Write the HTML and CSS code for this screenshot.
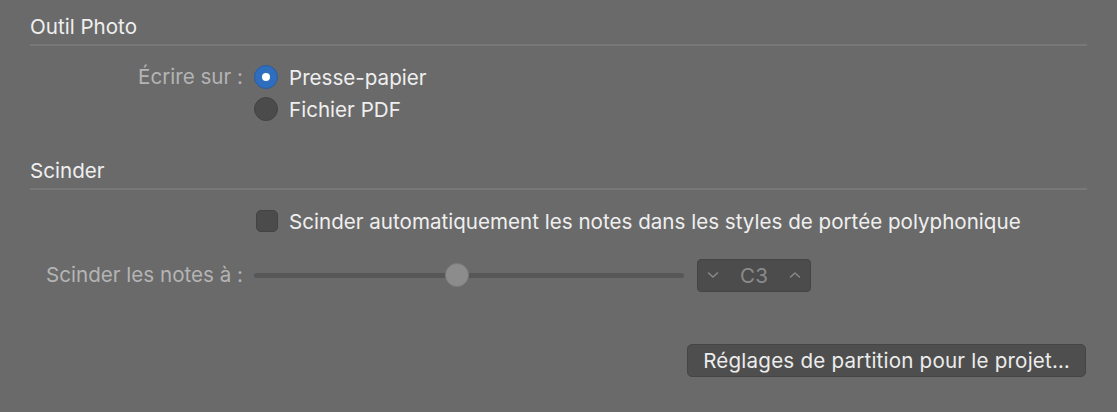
FILE: index.html
```html
<!DOCTYPE html>
<html lang="fr">
<head>
    <meta charset="UTF-8">
    <meta name="viewport" content="width=device-width, initial-scale=1.0">
    <link rel="stylesheet" href="styles.css">
    <title>Réglages de partition</title>
</head>
<body>

<div class="panel">
    <h2 class="section-title">Outil Photo</h2>

    <div class="form-row radio-group">
        <div class="form-label">Écrire sur :</div>
        <div class="form-controls">
            <label class="option">
                <span class="radio checked"></span>
                <span>Presse-papier</span>
            </label>
            <label class="option">
                <span class="radio"></span>
                <span>Fichier PDF</span>
            </label>
        </div>
    </div>

    <h2 class="section-title second">Scinder</h2>

    <div class="form-row check-row">
        <div class="form-label"></div>
        <div class="form-controls">
            <label class="option">
                <span class="checkbox"></span>
                <span>Scinder automatiquement les notes dans les styles de portée polyphonique</span>
            </label>
        </div>
    </div>

    <div class="form-row slider-row">
        <div class="form-label">Scinder les notes à :</div>
        <div class="form-controls inline">
            <div class="slider">
                <div class="slider-track"></div>
                <div class="slider-thumb" style="left: 44.4%"></div>
            </div>
            <div class="stepper">
                <svg class="chevron" width="12" height="8" viewBox="0 0 12 8"><path d="M1.5 2 L6 6 L10.5 2" /></svg>
                <span class="stepper-value">C3</span>
                <svg class="chevron" width="12" height="8" viewBox="0 0 12 8"><path d="M1.5 6 L6 2 L10.5 6" /></svg>
            </div>
        </div>
    </div>

    <div class="actions">
        <button class="button">Réglages de partition pour le projet…</button>
    </div>
</div>

</body>
</html>
```

FILE: styles.css
```css
body {
    margin: 0;
    background-color: #6a6a6a;
    font-family: Inter, "Noto Sans", sans-serif;
    font-size: 20.6px;
    color: #efefef;
}

.panel {
    padding: 15px 30px 0 30px;
}

.section-title {
    margin: 0;
    font-size: 20.6px;
    font-weight: normal;
    line-height: 24px;
    padding-bottom: 5px;
    border-bottom: 2px solid #787878;
}

.section-title.second {
    margin-top: 34px;
}

.form-row {
    display: flex;
}

.form-label {
    width: 213px;
    margin-right: 11px;
    flex-shrink: 0;
    text-align: right;
    color: #b4b4b4;
    line-height: 32px;
}

.form-controls {
    display: flex;
    flex-direction: column;
}

.radio-group {
    margin-top: 15px;
}

.option {
    display: flex;
    align-items: center;
    height: 32px;
    gap: 11px;
}

.radio {
    width: 22px;
    height: 22px;
    border-radius: 50%;
    background-color: #4b4b4b;
    border: 1px solid #434343;
    display: flex;
    align-items: center;
    justify-content: center;
}

.radio.checked {
    background-color: #2f6dbf;
    border-color: #2a5d9f;
}

.radio.checked::after {
    content: "";
    width: 8px;
    height: 8px;
    border-radius: 50%;
    background-color: #ffffff;
}

.check-row {
    margin-top: 15px;
}

.checkbox {
    width: 20px;
    height: 20px;
    margin-left: 2px;
    border-radius: 5px;
    background-color: #4b4b4b;
    border: 1px solid #434343;
}

.slider-row {
    margin-top: 21px;
    height: 34px;
    align-items: center;
}

.form-controls.inline {
    flex-direction: row;
    align-items: center;
    gap: 13px;
}

.slider {
    position: relative;
    width: 430px;
    height: 24px;
    display: flex;
    align-items: center;
}

.slider-track {
    width: 100%;
    height: 5px;
    border-radius: 3px;
    background-color: #575757;
}

.slider-thumb {
    position: absolute;
    top: 0;
    width: 22px;
    height: 22px;
    border-radius: 50%;
    background-color: #8c8c8c;
    border: 1px solid #7c7c7c;
}

.stepper {
    width: 114px;
    height: 33px;
    box-sizing: border-box;
    border: 1px solid #454545;
    border-radius: 4px;
    background-color: #4c4c4c;
    display: flex;
    align-items: center;
    justify-content: space-between;
    padding: 0 9px;
}

.stepper-value {
    color: #8a8a8a;
}

.chevron path {
    fill: none;
    stroke: #8a8a8a;
    stroke-width: 1.5;
    stroke-linecap: round;
    stroke-linejoin: round;
}

.actions {
    display: flex;
    justify-content: flex-end;
    margin-top: 52px;
    padding-right: 1px;
}

.button {
    font-family: inherit;
    font-size: 20.6px;
    letter-spacing: 0.2px;
    color: #ececec;
    background-color: #4e4e4e;
    border: 1px solid #454545;
    border-radius: 5px;
    height: 33px;
    padding: 0 15px;
}
```
